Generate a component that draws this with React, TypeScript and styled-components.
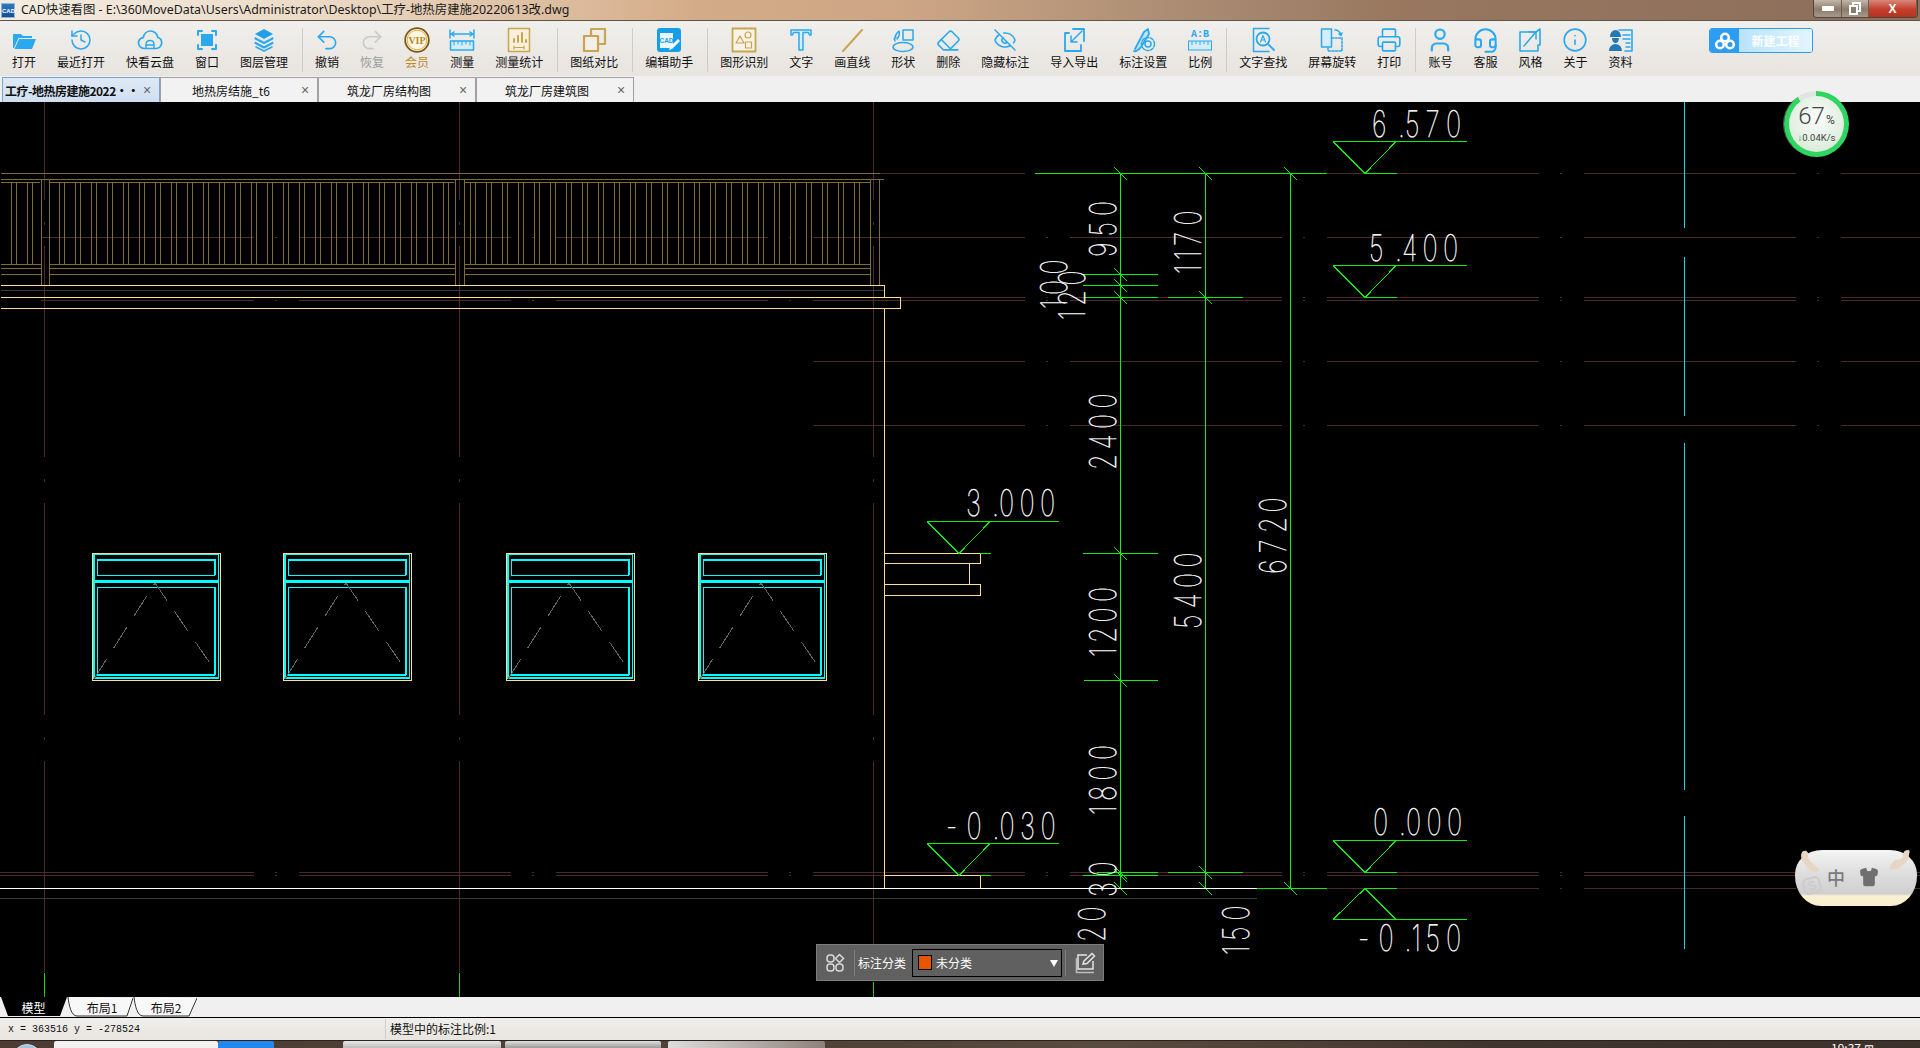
import React from 'react';
import styled, { createGlobalStyle } from 'styled-components';
import { History, Undo2, Redo2, Eraser, EyeOff, Printer, User, Headset, Info, Shirt } from 'lucide-react';

const BLUE = '#2aa9ee';
const GOLD = '#c8a550';
const SANS = '"Noto Sans CJK SC", "Noto Sans", sans-serif';

const Global = createGlobalStyle`
  html, body { margin: 0; padding: 0; background: #000; }
  #root { width: 1920px; height: 1048px; overflow: hidden; }
  * { box-sizing: border-box; }
`;

const Page = styled.div`
  width: 1920px; height: 1048px; display: flex; flex-direction: column;
  font-family: ${SANS}; font-size: 12px; color: #111; overflow: hidden;
`;

/* ---------- title bar ---------- */
const TitleBar = styled.header`
  height: 21px; flex: none; display: flex; align-items: center; padding-left: 1px; gap: 6px;
  background: linear-gradient(90deg, #f3ece2 0, #ecdcc8 300px, #d4ab88 700px, #cda686 900px, #a98b72 1200px, #99775f 1400px, #8e705c 1800px);
  border-bottom: 1px solid #5c5349; position: relative;
`;
const AppLogo = styled.div`
  width: 14px; height: 15px; background: linear-gradient(#2e78c4, #14508f); color: #fff;
  font: bold 6px/15px "Liberation Sans", sans-serif; text-align: center; border: 1px solid #8fb4dc;
`;
const TitleText = styled.span`
  font-size: 12.4px; line-height: 20px; color: #1a1a1a; white-space: nowrap; font-family: "Noto Sans", "Noto Sans CJK SC", sans-serif;
`;
const WinControls = styled.div`
  position: absolute; right: 2px; top: 0; height: 18px; display: flex; border: 1px solid #4d443b; border-top: 0; border-radius: 0 0 4px 4px; overflow: hidden;
`;
const WinBtn = styled.div<{ $close?: boolean; $w: number }>`
  width: ${p => p.$w}px; display: flex; align-items: center; justify-content: center; color: #fff;
  font: bold 12px "Liberation Sans", sans-serif; border-right: 1px solid #6a5e52;
  background: ${p => p.$close ? 'linear-gradient(#d9887a, #c23f2b 55%, #b5341f)' : 'linear-gradient(#c4b8ab, #8b7b6c 55%, #a69a8d)'};
`;

/* ---------- toolbar ---------- */
const Toolbar = styled.nav`
  height: 55px; flex: none; display: flex; align-items: flex-start; padding: 6px 0 0 1.5px; position: relative;
  background: linear-gradient(#f0efec, #e8e4df);
`;
const ToolBtn = styled.div`
  padding: 0 10.5px; display: flex; flex-direction: column; align-items: center; white-space: nowrap; flex: none;
`;
const ToolIcon = styled.div`
  height: 26px; width: 24px; display: flex; align-items: center; justify-content: center;
  svg { flex: none; }
`;
const ToolLabel = styled.span<{ $c?: string }>`
  font-size: 12px; line-height: 16px; margin-top: 1px; color: ${p => p.$c || '#111'};
`;
const ToolSep = styled.i`
  width: 1px; height: 44px; background: #cfcbc6; margin: 1px 1.5px 0 3.5px; flex: none;
`;
const CloudBtn = styled.div`
  position: absolute; left: 1709px; top: 7px; width: 104px; height: 25px; border: 1px solid #2d9cf0; border-radius: 3px; display: flex; overflow: hidden;
`;
const CloudLogo = styled.div`
  width: 29px; background: #2c9df2; display: flex; align-items: center; justify-content: center;
`;
const CloudName = styled.div`
  flex: 1; background: linear-gradient(90deg, #b8e3fb, #e2f5ff); color: #fff; font-weight: 700; font-size: 12px; line-height: 23px; text-align: center;
`;

/* ---------- file tabs ---------- */
const TabStrip = styled.div`
  height: 26px; flex: none; background: #f0f0f0; display: flex; align-items: flex-end; padding-left: 2px;
`;
const FileTab = styled.div<{ $active?: boolean }>`
  width: 158px; height: 25px; display: flex; align-items: center; position: relative; flex: none;
  border: 1px solid ${p => p.$active ? '#7da2ce' : '#a0a0a0'}; border-bottom: 0;
  background: ${p => p.$active ? 'linear-gradient(#dfe9f5, #cfdff1)' : '#f2f2f2'};
  font-weight: ${p => p.$active ? 700 : 400}; color: #111;
`;
const TabName = styled.span<{ $active?: boolean }>`
  flex: 1; min-width: 0; text-align: ${p => p.$active ? 'left' : 'center'}; white-space: nowrap; padding-left: ${p => p.$active ? '2px' : '8px'};
  letter-spacing: ${p => p.$active ? '-0.5px' : '0'};
`;
const TabClose = styled.span`
  width: 24px; text-align: center; color: #666; font: 14px "Liberation Sans", sans-serif; flex: none;
`;

/* ---------- canvas ---------- */
const Canvas = styled.main`
  flex: 1; min-height: 0; background: #000; position: relative;
`;
const Cad = styled.svg`
  display: block; width: 1920px; height: 895px; shape-rendering: crispEdges;
`;
const DimText = styled.text`
  font-family: Inter, Roboto, sans-serif; font-weight: 100; font-size: 36.7px; fill: #fff; stroke: #fff; stroke-width: 0.45px; text-rendering: geometricPrecision;
`;

const Panel = styled.div`
  position: absolute; left: 816px; top: 842px; width: 288px; height: 37px; background: #606060; border: 1px solid #7d7d7d;
  display: flex; align-items: center; color: #fff; padding-left: 8px;
`;
const PanelSep = styled.i`
  width: 1px; height: 26px; background: #808080; flex: none;
`;
const PanelLabel = styled.span`
  margin: 0 6px 0 3px; font-size: 12px; white-space: nowrap;
`;
const PanelSelect = styled.div`
  width: 150px; height: 28px; border: 1px solid #000; display: flex; align-items: center; padding-left: 5px; gap: 4px; font-size: 12px; position: relative; margin-right: 3px;
`;
const Swatch = styled.span`
  width: 14px; height: 15px; background: #e85500; border: 1px solid #000;
`;
const Caret = styled.span`
  position: absolute; right: 3px; top: 10px; width: 0; height: 0; border: 4.5px solid transparent; border-top: 7px solid #fff; border-bottom: 0;
`;

const Ball = styled.div`
  position: absolute; left: 1784px; top: -11px; width: 65px; height: 66px; border-radius: 50%;
  background: conic-gradient(#2fd561 0 325deg, #dfe6df 325deg 360deg); display: flex; align-items: center; justify-content: center;
  box-shadow: -2px 0 0 -1px #555;
`;
const BallInner = styled.div`
  width: 55px; height: 56px; border-radius: 50%; background: radial-gradient(circle at 50% 40%, #fbfdfb, #d9ebd9 80%); display: flex; flex-direction: column; align-items: center; justify-content: center; color: #444; font-family: Roboto, sans-serif;
`;
const BallNum = styled.div`
  font-size: 24px; line-height: 24px; font-weight: 300; b { font-size: 12px; font-weight: 400; margin-left: 1px; }
`;
const BallSpeed = styled.div`
  font-size: 9.5px; line-height: 12px; white-space: nowrap; i { color: #1ca63f; font-style: normal; font-weight: 700; }
`;

const Ime = styled.div`
  position: absolute; left: 1795px; top: 748px; width: 122px; height: 56px; border-radius: 27px 27px 26px 26px / 24px 24px 30px 30px;
  background: linear-gradient(#f4f4f4, #dcdcdc 45%, #cfcfcf 78%, #fbf1d2 82%, #f9edcb);
  display: flex; align-items: center; justify-content: center; gap: 14px; padding: 2px 6px 4px 0; color: #777;
`;
const ImeChar = styled.span`
  font-size: 18px; font-weight: 500; color: #7b7b7b;
`;
const ImeS = styled.span`
  position: absolute; left: 8px; top: 27px; font: bold 13px "Liberation Sans", sans-serif; color: #cbcbcb; transform: rotate(-15deg); border: 2px solid #cbcbcb; border-radius: 5px; width: 18px; height: 17px; line-height: 13px; text-align: center;
`;
const ImeEars = styled.svg`
  position: absolute; left: 0; top: -2px;
`;

/* ---------- bottom ---------- */
const LayoutBar = styled.div`
  height: 20px; flex: none; background: #f0f0f0; display: flex; align-items: flex-start;
`;
const LayoutTab = styled.div<{ $w: number; $active?: boolean; $pl?: number }>`
  width: ${p => p.$w}px; height: 20px; position: relative; display: flex; align-items: center; justify-content: center; flex: none;
  padding-left: ${p => p.$pl || 0}px;
  color: ${p => p.$active ? '#fff' : '#111'}; font-size: 12px;
  span { position: relative; }
  svg { position: absolute; left: 0; top: 0; }
`;
const StatusBar = styled.footer`
  height: 23px; flex: none; border-top: 1px solid #000; background: linear-gradient(#f0efec, #e8e4df); display: flex; align-items: center; position: relative;
`;
const Coord = styled.div`
  width: 385px; padding-left: 8px; font: 10px "Liberation Mono", monospace; color: #111; flex: none;
`;
const StatusNote = styled.div`
  border-left: 1px solid #d0cdc8; height: 20px; padding-left: 4px; font-size: 12px; line-height: 20px; color: #111;
`;
const Taskbar = styled.div`
  height: 8px; flex: none; position: relative; overflow: hidden; display: flex; align-items: flex-start;
  background: linear-gradient(90deg, #4c3c33, #50433a 900px, #5b4b40 1100px, #40352e 1500px, #3d322b); border-top: 1px solid #2a221d;
`;
const Orb = styled.div`
  width: 30px; height: 30px; margin: 3px 0 0 12px; border-radius: 50%; background: #9fc4de; border: 1px solid #cfe0ee; flex: none;
`;
const TaskStrip = styled.div<{ $w: number; $c: string; $ml?: number }>`
  width: ${p => p.$w}px; height: 7px; background: ${p => p.$c}; margin-left: ${p => p.$ml || 0}px; flex: none; border-radius: 2px 2px 0 0;
`;
const Clock = styled.div`
  position: absolute; left: 1831px; top: 0; color: #fff; font-size: 12px; line-height: 14px;
`;

/* ---------- icons ---------- */
const S: React.FC<{ children: React.ReactNode; w?: number; h?: number; vb?: string }> = ({ children, w = 26, h = 26, vb = '0 0 26 26' }) => (
  <svg width={w} height={h} viewBox={vb} fill="none" stroke={BLUE} strokeWidth={1.5} strokeLinejoin="round" strokeLinecap="round">{children}</svg>
);
const lu = { size: 24, color: BLUE, strokeWidth: 1.5 };

const icons: Record<string, React.ReactNode> = {
  open: <S><path fill={BLUE} stroke="none" d="M2 7h8l2 2h9v2H7.5L3 21H2z" /><path fill={BLUE} stroke="none" d="M8 12h17l-4 10H3.5z" /></S>,
  recent: <History {...lu} />,
  cloud: <S><path strokeWidth={1.7} d="M7.5 21.5C4 21.5 1.5 19 1.5 16c0-2.8 2-5 4.7-5.4C7 6.800 10 4 13.500 4c3.800 0 6.800 2.800 7.200 6.500 2.500.6 4 2.800 4 5.300 0 3-2.400 5.700-5.500 5.700z" /><path d="M9 21v-3.500c0-2.500 1.800-4 4-4s4 1.500 4 4V21M9 18h8" /></S>,
  win: <S><path strokeWidth={2} d="M4 8V4h4M18 4h4v4M22 18v4h-4M8 22H4v-4" /><rect x="7" y="7" width="12" height="12" fill={BLUE} stroke="none" /></S>,
  layers: <S><path fill="#1f9fe8" stroke="none" d="M13 2l9 5-9 5-9-5z" /><path strokeWidth={2.200} d="M4.500 11.500L13 16l8.500-4.500M4.500 16L13 20.500l8.500-4.500" /><path strokeWidth={1.500} d="M5 20l8 4 8-4" /></S>,
  undo: <Undo2 {...lu} size={26} />,
  redo: <Redo2 {...lu} size={26} color="#c9c9c9" />,
  vip: <svg width={26} height={26} viewBox="0 0 26 26"><circle cx="13" cy="13" r="11.800" fill="#fdf6e2" stroke="#7d5a1c" strokeWidth={1.800} /><circle cx="13" cy="13" r="9.800" fill="none" stroke="#e2b349" strokeWidth={1} /><text x="13" y="16.500" textAnchor="middle" fontFamily='"Liberation Serif", serif' fontWeight={700} fontSize={10} fill="#b8862a">VIP</text></svg>,
  measure: <S w={26} h={26}><path d="M1 3v8M25 3v8M2 7h22M5 5L2 7l3 2M21 5l3 2-3 2" /><rect x="1.500" y="14" width="23" height="9" fill="#d5edfb" /><path strokeWidth={1} d="M5 14v4M9 14v3M13 14v4M17 14v3M21 14v4" /></S>,
  stat: <S><rect x="2.500" y="1.500" width="21" height="23" stroke={GOLD} fill="#f6f0dc" /><path stroke={GOLD} strokeWidth={2} d="M8 15v-3M12 15V9M16 15V6M20 15v-2" /><path stroke={GOLD} strokeWidth={1.200} d="M8 19v3M18 19v3M9 20.500h8" /></S>,
  compare: <S><rect x="10" y="2" width="14" height="15" stroke={GOLD} strokeWidth={2.200} /><rect x="3" y="9" width="14" height="15" stroke={GOLD} strokeWidth={2.200} fill="#f3efe8" /></S>,
  cad: <svg width={26} height={26} viewBox="0 0 26 26"><rect x="1" y="1" width="24" height="24" rx="3" fill="#159ee9" /><rect x="4" y="6" width="13" height="15" fill="#fff" opacity=".9" /><text x="10.500" y="15.500" textAnchor="middle" fontFamily='"Liberation Sans", sans-serif' fontWeight={700} fontSize={6.500} fill="#159ee9">CAD</text><path d="M14 20l8-8 2 2-8 8-3 1z" fill="#fff" /></svg>,
  shapeId: <S><rect x="1.500" y="1.500" width="23" height="23" stroke={GOLD} strokeWidth={1.800} fill="#f7f3e6" /><path stroke={GOLD} strokeWidth={1.200} d="M9 9l-4 7h8z" /><circle cx="17" cy="8" r="3" stroke={GOLD} strokeWidth={1.200} /><rect x="14.500" y="15" width="6" height="6" stroke={GOLD} strokeWidth={1.200} /></S>,
  text: <S><path strokeWidth={1.500} fill="#d6eefb" d="M3 3h20v5h-1.500l-1-2.500H15V23h-4V5.500H5.500L4.500 8H3z" /></S>,
  line: <S><path stroke={GOLD} strokeWidth={2} d="M4 24L23 3" /></S>,
  shape: <S><rect x="13" y="3" width="10" height="10" /><ellipse cx="13" cy="20" rx="10" ry="4.500" /><path d="M5 14c-1-3 0-5 2-8l2-2c1 2 0 6-2 8M6 10l-2 2" /></S>,
  erase: <Eraser {...lu} size={25} />,
  hide: <EyeOff {...lu} />,
  import: <S><path strokeWidth={1.800} d="M8 6H4v18h16v-6M12 2h11v12" /><path d="M21 4L10 15M10 9v6h6" /></S>,
  settings: <S><path strokeWidth={1.800} d="M5 22L14 5l4-3 1 5-8 13c-2 3-6 5-7 4" fill="#bfe5fa" /><circle cx="18" cy="17" r="3" /><circle cx="18" cy="17" r="6.500" strokeDasharray="3 1.600" /></S>,
  ratio: <svg width={26} height={26} viewBox="0 0 26 26"><text x="13" y="10" textAnchor="middle" fontFamily='"Liberation Mono", monospace' fontWeight={700} fontSize={10} fill={BLUE}>A:B</text><rect x="1.500" y="14" width="23" height="9" fill="#d5edfb" stroke={BLUE} /><path stroke={BLUE} d="M5 14v4M9 14v3M13 14v4M17 14v3M21 14v4" /></svg>,
  find: <S><path d="M19 1.500H3.500v23H19" /><circle cx="13" cy="12" r="6.500" strokeWidth={1.800} /><path strokeWidth={1.800} d="M18 17l6 6" /><path strokeWidth={1.100} d="M10.500 15L13 8.500 15.500 15M11.500 13h3" /></S>,
  rotate: <S><rect x="2.500" y="2" width="10" height="18" fill="#d5edfb" /><path strokeDasharray="2 1.500" d="M12.500 11H23v13H9v-4" /><path d="M16 3c3 0 5 2 6 5M20 7l2 1.500 1-2.500" /></S>,
  print: <Printer {...lu} size={26} />,
  user: <User {...lu} size={28} strokeWidth={1.900} />,
  head: <Headset {...lu} size={27} strokeWidth={1.800} />,
  style: <S><path strokeWidth={1.600} d="M3 5h16l4-3v16h-2v6H3z" /><path d="M7 19L18 6M12 5h7v7" /></S>,
  info: <Info {...lu} size={26} strokeWidth={1.500} />,
  data: <S><path strokeWidth={1.600} d="M12 3h13v21H18" /><path d="M16 8h7M16 12h7M19 16h4M19 20h4" /><path fill="#2379b5" stroke="none" d="M3 10c0-4 2.500-7 5.500-7S14 6 14 10H3zM5 11h7c0 3-1.500 5-3.500 5S5 14 5 11zM2 24c0-4 3-7 6.500-7s6.500 3 6.500 7z" /></S>,
};

type Item = { k?: string; t?: string; c?: string; sep?: boolean };
const tools: Item[] = [
  { k: 'open', t: '打开' }, { k: 'recent', t: '最近打开' }, { k: 'cloud', t: '快看云盘' }, { k: 'win', t: '窗口' }, { k: 'layers', t: '图层管理' }, { sep: true },
  { k: 'undo', t: '撤销' }, { k: 'redo', t: '恢复', c: '#9c9c9c' }, { k: 'vip', t: '会员', c: '#c08a2c' }, { k: 'measure', t: '测量' }, { k: 'stat', t: '测量统计' }, { sep: true },
  { k: 'compare', t: '图纸对比' }, { sep: true }, { k: 'cad', t: '编辑助手' }, { sep: true },
  { k: 'shapeId', t: '图形识别' }, { k: 'text', t: '文字' }, { k: 'line', t: '画直线' }, { k: 'shape', t: '形状' }, { k: 'erase', t: '删除' }, { k: 'hide', t: '隐藏标注' }, { k: 'import', t: '导入导出' }, { k: 'settings', t: '标注设置' }, { k: 'ratio', t: '比例' }, { sep: true },
  { k: 'find', t: '文字查找' }, { k: 'rotate', t: '屏幕旋转' }, { k: 'print', t: '打印' }, { sep: true },
  { k: 'user', t: '账号' }, { k: 'head', t: '客服' }, { k: 'style', t: '风格' }, { k: 'info', t: '关于' }, { k: 'data', t: '资料' },
];

/* ---------- CAD drawing data ---------- */
const hl = (x1: number, x2: number, y: number) => `M${x1} ${y + .5}H${x2}`;
const vl = (x: number, y1: number, y2: number) => `M${x + .5} ${y1}V${y2}`;
const seg = (x1: number, y1: number, x2: number, y2: number) => `M${x1} ${y1}L${x2} ${y2}`;

const gapsX = [254, 511, 768, 1025, 1282, 1539, 1796];
const redH = (y: number, from = 0) => {
  let out = ''; let s = from;
  gapsX.forEach(g => { if (g > s) { out += hl(s, g, y); out += hl(g + 21, g + 23, y); s = g + 45; } });
  return out + hl(s, 1920, y);
};
const redV = (x: number) => vl(x, 102, 200) + vl(x, 222, 225) + vl(x, 246, 457) + vl(x, 479, 482) + vl(x, 503, 715) + vl(x, 737, 740) + vl(x, 761, 972);
const redPath = [173, 237, 297, 300].map(y => redH(y, 41)).join('') + [361, 425].map(y => redH(y, 813)).join('') + redH(872, 0) + redH(875, 0) + redH(888, 1327) + redV(44) + redV(459) + redV(873);

const inPost = (x: number) => (x > 38 && x < 51) || (x > 452 && x < 466);
let rail = hl(1, 880, 173) + hl(1, 884, 179) + hl(1, 40, 182) + hl(49, 454, 182) + hl(464, 870, 182);
[[41, 49], [455, 464], [870, 879]].forEach(([a, b]) => { rail += vl(a, 179, 285) + vl(b, 179, 285); });
[264, 268, 274].forEach(y => { rail += hl(1, 41, y) + hl(49, 455, y) + hl(464, 870, y); });
[11, 27, ...Array.from({ length: 25 }, (_, i) => 59 + 16 * i), ...Array.from({ length: 25 }, (_, i) => 470 + 16 * i)].forEach(x => {
  if (!inPost(x) && x < 866) { rail += vl(x, 183, 264) + vl(x + 5, 183, 264); }
});

const goldPath = hl(1, 885, 285) + hl(1, 900, 297) + hl(1, 900, 308) + vl(884, 285, 297) + vl(900, 297, 309) + vl(884, 308, 888)
  + hl(885, 980, 553) + hl(885, 980, 563) + vl(980, 553, 564) + vl(969, 563, 585) + hl(885, 980, 584) + hl(885, 980, 595) + vl(980, 584, 596)
  + hl(885, 980, 875) + vl(980, 875, 888);

const tri = (lx: number, top: number, apexY: number, rx: number, ax: number, cx: number) =>
  hl(lx, rx, top) + seg(lx, top + .5, ax, apexY + .5) + seg(ax, apexY + .5, cx, top + .5);
const tick = (x: number, y: number) => seg(x - 6, y - 6, x + 7, y + 7);
const greenPath = [
  vl(1120, 173, 888), vl(1205, 173, 888), vl(1290, 173, 888),
  hl(1035, 1327, 173),
  hl(1083, 1158, 274), hl(1083, 1158, 285), hl(1085, 1158, 297), hl(1168, 1243, 297),
  hl(1083, 1158, 553), hl(1084, 1158, 680), hl(1097, 1158, 872), hl(1168, 1243, 872), hl(1083, 1158, 875),
  hl(1257, 1327, 888), hl(980, 991, 553), hl(980, 991, 875),
  tri(927, 521, 553, 1059, 959, 990), tri(927, 843, 875, 1059, 959, 990),
  tri(1333, 141, 173, 1467, 1365, 1396), hl(1365, 1397, 173),
  tri(1333, 265, 297, 1467, 1365, 1396), hl(1365, 1397, 297),
  tri(1333, 840, 872, 1467, 1365, 1396), hl(1365, 1397, 872),
  hl(1333, 1467, 919), seg(1333, 919.500, 1365, 888.500), seg(1365, 888.500, 1396, 919.500), hl(1365, 1397, 888),
  ...[[1120, 173], [1205, 173], [1290, 173], [1120, 274], [1120, 285], [1120, 297], [1205, 297], [1120, 553], [1120, 680], [1120, 872], [1120, 875], [1120, 888], [1205, 872], [1205, 888], [1290, 888]].map(([x, y]) => tick(x, y)),
].join('');

const winXs = [92, 283, 506, 698];
const cyanThin = (x: number) => {
  const r = x + 126;
  return `M${x + 1.500} 554.500H${r}V580.500H${x + 1.500}Z M${x + 1.500} 582.500H${r}V678.500H${x + 1.500}Z`;
};
const cyanThick = (x: number) => {
  const l = x + 5.500; const r = x + 122.500;
  return `M${l} 559.500H${r}V575.500H${l}Z M${l} 587.500H${r}V674.500H${l}Z`;
};

const dimPositions = (s: string) => {
  const pos: number[] = []; let p = 0;
  [...s].forEach((c, i) => {
    pos.push(p);
    if (c === '.') p += 7;
    else if (c === '1') p += 14;
    else if (s[i + 1] === '.') p += 26;
    else p += 20.5;
  });
  return pos;
};
const Dim: React.FC<{ t: string; x: number; y: number; v?: boolean }> = ({ t, x, y, v }) => {
  const sx = .7;
  const xs = dimPositions(t).map(p => (p / sx).toFixed(1)).join(' ');
  return <DimText x={xs} y={0} transform={`translate(${x} ${y}) ${v ? 'rotate(-90) ' : ''}scale(${sx} 1)`}>{t}</DimText>;
};

const Drawing = () => (
  <Cad viewBox="0 102 1920 895" fill="none">
    <path d={redPath} stroke="#4d2a2a" />
    <path d={vl(44, 973, 997) + vl(459, 973, 997) + vl(873, 982, 997)} stroke="#19d119" />
    <path d={rail} stroke="#7e6b36" />
    <path d={hl(1, 885, 290) + hl(0, 1257, 898)} stroke="#3c3c3c" />
    <path d={goldPath} stroke="#ffdf8f" />
    {winXs.map(x => (
      <g key={x}>
        <rect x={x + .5} y={553.500} width={128} height={127} stroke="#ffdf8f" />
        <path d={cyanThin(x)} stroke="#00ffff" />
        <path d={cyanThick(x)} stroke="#00ffff" />
        <path d={hl(x + 5, x + 123, 559) + hl(x + 5, x + 123, 674) + vl(x + 122, 559, 575) + vl(x + 122, 587, 675) + hl(x + 1, x + 127, 581) + hl(x + 1, x + 127, 677) + vl(x + 1, 554, 679)} stroke="#00ffff" strokeWidth={2} />
        <path d={`M${x + 2} 679L${x + 63} 583L${x + 124} 672`} stroke="#666" strokeDasharray="24 13" />
      </g>
    ))}
    <path d={greenPath} stroke="#10ee10" />
    <path d={hl(0, 1257, 888)} stroke="#fff" />
    <path d={vl(1684, 102, 228) + vl(1684, 257, 416) + vl(1684, 443, 790) + vl(1684, 816, 949)} stroke="#22d4e0" />

    <Dim t="6.570" x={1372} y={137} />
    <Dim t="5.400" x={1369} y={261} />
    <Dim t="3.000" x={966} y={516} />
    <Dim t="-0.030" x={946} y={839} />
    <Dim t="0.000" x={1373} y={835} />
    <Dim t="-0.150" x={1358} y={951} />
    <Dim t="950" v x={1116} y={257} />
    <Dim t="1170" v x={1201} y={274} />
    <Dim t="100" v x={1067} y={309} />
    <Dim t="120" v x={1085} y={320} />
    <Dim t="2400" v x={1116} y={470} />
    <Dim t="1200" v x={1116} y={657} />
    <Dim t="5400" v x={1201} y={629} />
    <Dim t="6720" v x={1286} y={574} />
    <Dim t="1800" v x={1116} y={815} />
    <Dim t="30" v x={1116} y={897} />
    <Dim t="20" v x={1105} y={942} />
    <Dim t="150" v x={1249} y={955} />
  </Cad>
);

export default function App() {
  return (
    <Page>
      <Global />
      <TitleBar>
        <AppLogo>CAD</AppLogo>
        <TitleText>CAD快速看图 - E:\360MoveData\Users\Administrator\Desktop\工疗-地热房建施20220613改.dwg</TitleText>
        <WinControls>
          <WinBtn $w={28}><svg width="12" height="5"><rect width="12" height="5" rx="1" fill="#fff" /></svg></WinBtn>
          <WinBtn $w={27}><svg width="12" height="13" fill="none" stroke="#fff" strokeWidth="2"><rect x="4" y="1" width="7" height="8" /><rect x="1" y="4" width="7" height="8" fill="#8b7b6c" /></svg></WinBtn>
          <WinBtn $w={48} $close>X</WinBtn>
        </WinControls>
      </TitleBar>

      <Toolbar>
        {tools.map((it, i) => it.sep
          ? <ToolSep key={i} />
          : <ToolBtn key={i}><ToolIcon>{icons[it.k!]}</ToolIcon><ToolLabel $c={it.c}>{it.t}</ToolLabel></ToolBtn>)}
        <CloudBtn>
          <CloudLogo>
            <svg width="20" height="18" viewBox="0 0 20 18" fill="none" stroke="#fff" strokeWidth="2.600"><circle cx="10" cy="5.500" r="3.800" /><circle cx="5" cy="12.500" r="3.800" /><circle cx="15" cy="12.500" r="3.800" /></svg>
          </CloudLogo>
          <CloudName>新建工程</CloudName>
        </CloudBtn>
      </Toolbar>

      <TabStrip>
        <FileTab $active><TabName $active>工疗-地热房建施2022··</TabName><TabClose>×</TabClose></FileTab>
        <FileTab><TabName>地热房结施_t6</TabName><TabClose>×</TabClose></FileTab>
        <FileTab><TabName>筑龙厂房结构图</TabName><TabClose>×</TabClose></FileTab>
        <FileTab><TabName>筑龙厂房建筑图</TabName><TabClose>×</TabClose></FileTab>
      </TabStrip>

      <Canvas>
        <Drawing />
        <Ball>
          <BallInner>
            <BallNum>67<b>%</b></BallNum>
            <BallSpeed><i>↓</i>0.04K/s</BallSpeed>
          </BallInner>
        </Ball>
        <Panel>
          <svg width="20" height="20" viewBox="0 0 20 20" fill="none" stroke="#d8d8d8" strokeWidth="1.500" style={{ marginRight: 9, flex: 'none' }}>
            <rect x="2" y="2" width="7" height="7" rx="3" /><path d="M14.500 1.500l4 4-4 4-4-4z" /><rect x="2" y="11" width="7" height="7" rx="3" /><rect x="11" y="11" width="7" height="7" rx="3" />
          </svg>
          <PanelSep />
          <PanelLabel>标注分类</PanelLabel>
          <PanelSelect><Swatch />未分类<Caret /></PanelSelect>
          <PanelSep />
          <svg width="22" height="22" viewBox="0 0 22 22" fill="none" stroke="#e4e4e4" strokeWidth="1.500" style={{ marginLeft: 9, flex: 'none' }}>
            <path d="M12 3H3v14h15v-8" /><path d="M1.500 6v14.500H19" opacity=".7" /><path d="M8 12l1-3 8-7.500 2.500 2.500L12 11.500z" />
          </svg>
        </Panel>
        <Ime>
          <ImeEars width="122" height="30" viewBox="0 0 122 30" fill="#e6d6c3">
            <path d="M7 4c4-3 7 0 6 4-1 3 5 8 12 14-4 4-8 2-12-2C9 16 4 10 7 4z" />
            <path d="M113 2c-4 0-5 3-5 6 0 3-4 4-7 4-3 0-6 6-7 9 5 2 11-1 14-4 4-3 6-6 6-11 1-2 1-4-1-4z" />
          </ImeEars>
          <ImeS>S</ImeS>
          <ImeChar>中</ImeChar>
          <Shirt size={20} color="#6f6f6f" fill="#6f6f6f" />
        </Ime>
      </Canvas>

      <LayoutBar>
        <LayoutTab $w={67} $active>
          <svg width="67" height="20"><path d="M1 0L8 19H60L67 0Z" fill="#000" /></svg>
          <span>模型</span>
        </LayoutTab>
        <LayoutTab $w={66} $pl={4}>
          <svg width="66" height="20" fill="#f8f8f8" stroke="#333"><path d="M1 0C2 8 4 19 10 19H60L66 1" /></svg>
          <span>布局1</span>
        </LayoutTab>
        <LayoutTab $w={64} $pl={2}>
          <svg width="64" height="20" fill="#f8f8f8" stroke="#333"><path d="M1 0C2 8 4 19 10 19H56L64 1" /></svg>
          <span>布局2</span>
        </LayoutTab>
      </LayoutBar>
      <StatusBar>
        <Coord>x = 363516 y = -278524</Coord>
        <StatusNote>模型中的标注比例:1</StatusNote>
      </StatusBar>
      <Taskbar>
        <Orb />
        <TaskStrip $w={164} $c="#f2f2f2" $ml={12} />
        <TaskStrip $w={56} $c="#2288ee" />
        <TaskStrip $w={158} $c="linear-gradient(#e8e8e8,#bbb)" $ml={69} />
        <TaskStrip $w={156} $c="linear-gradient(#e0e0e0,#999)" $ml={4} />
        <TaskStrip $w={157} $c="linear-gradient(90deg,#ddd,#8d827a)" $ml={7} />
        <Clock>19:37 ⊞</Clock>
      </Taskbar>
    </Page>
  );
}
